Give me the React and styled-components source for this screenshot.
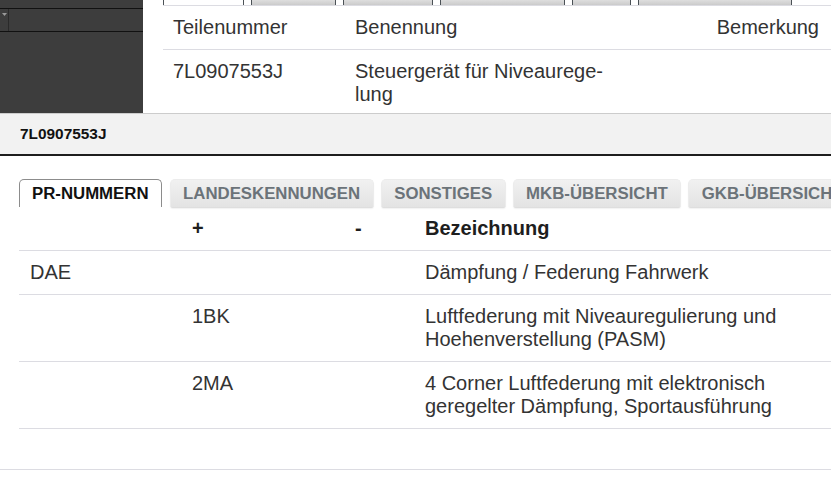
import React from "react";
import styled, { createGlobalStyle } from "styled-components";

const GlobalStyle = createGlobalStyle`
  html, body {
    margin: 0;
    padding: 0;
    background: #ffffff;
    overflow: hidden;
  }

  body {
    font-family: "Liberation Sans", Arial, sans-serif;
    color: #333333;
  }
`;

const Page = styled.div`
  width: 831px;
  height: 501px;
  display: flex;
  flex-direction: column;
  overflow: hidden;
`;

const TopArea = styled.div`
  height: 113px;
  display: flex;
  overflow: hidden;
  flex-shrink: 0;
`;

const Sidebar = styled.aside`
  width: 143px;
  flex-shrink: 0;
  background: #3d3d3d;
  padding-top: 8px;
`;

const SideSelect = styled.div`
  height: 22px;
  border-top: 1px solid #111111;
  border-bottom: 1px solid #111111;
  display: flex;
`;

const SideArrow = styled.div`
  width: 9px;
  border-right: 1px solid #2a2a2a;
  display: flex;
  justify-content: center;
  padding-top: 4px;
  box-sizing: border-box;
`;

const Main = styled.main`
  flex: 1;
  padding-left: 20px;
  display: flex;
  flex-direction: column;
  & > * {
    flex-shrink: 0;
  }
`;

const TopTabs = styled.div`
  height: 5px;
  display: flex;
  gap: 7px;
  border-bottom: 1px solid #dcdce2;
  overflow: hidden;
`;

const TopTab = styled.div`
  width: ${(p) => p.$w}px;
  height: 5px;
  flex-shrink: 0;
  box-sizing: border-box;
  border-left: 1px solid #4b5156;
  border-right: 1px solid #4b5156;
  background: ${(p) =>
    p.$active ? "#ffffff" : "linear-gradient(#dedede, #cbcbcb)"};
`;

const PartsTable = styled.div`
  display: grid;
  grid-template-columns: 182px 275px 1fr;
  font-size: 20px;
  line-height: 23px;
  color: #333333;
`;

const PartsCell = styled.div`
  padding: 10px 12px 10px 10px;
  border-bottom: 1px solid #dcdce2;
  text-align: ${(p) => (p.$right ? "right" : "left")};
  hyphens: manual;
`;

const Panel = styled.section`
  flex: 1;
  border-top: 1px solid #cccccc;
  display: flex;
  flex-direction: column;
`;

const PanelHeader = styled.header`
  height: 40px;
  background: #f2f2f2;
  border-bottom: 2px solid #1e1e1e;
  display: flex;
  align-items: center;
  padding-left: 20px;
  font-size: 15.4px;
  font-weight: bold;
  color: #111111;
`;

const PanelBody = styled.div`
  padding: 23px 0 40px 19px;
`;

const TabRow = styled.div`
  display: flex;
  gap: 7px;
  white-space: nowrap;
`;

const Tab = styled.div`
  height: 28px;
  box-sizing: border-box;
  padding: 0 ${(p) => (p.$active ? 12 : 12.5)}px;
  margin-right: ${(p) => (p.$active ? 1 : 0)}px;
  display: flex;
  align-items: center;
  font-size: 16.8px;
  font-weight: bold;
  border-radius: 5px 5px 0 0;
  flex-shrink: 0;
  color: ${(p) => (p.$active ? "#111111" : "#6b7379")};
  background: ${(p) =>
    p.$active ? "#ffffff" : "linear-gradient(#f1f1f1, #e3e3e3)"};
  border: 1px solid ${(p) => (p.$active ? "#8c8c8c" : "#ececec")};
  border-bottom: none;
  box-shadow: ${(p) => (p.$active ? "none" : "0 2px 2px -1px rgba(0,0,0,0.18)")};
`;

const PrTable = styled.div`
  display: grid;
  grid-template-columns: 162px 163px 70px 1fr;
  font-size: 20px;
  line-height: 23px;
  color: #333333;
`;

const PrCell = styled.div`
  padding: 10px 11px;
  border-bottom: 1px solid #dcdce2;
  font-weight: ${(p) => (p.$head ? "bold" : "normal")};
  color: ${(p) => (p.$head ? "#1e1e1e" : "#333333")};
`;

const Footer = styled.footer`
  border-top: 1px solid #dcdce2;
  flex: 1;
`;

const topTabs = [81, 85, 90, 125, 59, 154];

const tabs = [
  "PR-NUMMERN",
  "LANDESKENNUNGEN",
  "SONSTIGES",
  "MKB-ÜBERSICHT",
  "GKB-ÜBERSICHT",
];

const prRows = [
  ["DAE", "", "", "Dämpfung / Federung Fahrwerk"],
  ["", "1BK", "", "Luftfederung mit Niveauregulierung und Hoehenverstellung (PASM)"],
  ["", "2MA", "", "4 Corner Luftfederung mit elektronisch geregelter Dämpfung, Sportausführung"],
];

export default function App() {
  return (
    <Page>
      <GlobalStyle />
      <TopArea>
        <Sidebar>
          <SideSelect>
            <SideArrow>
              <svg width="5" height="3" viewBox="0 0 5 3">
                <path d="M0 0 H5 L2.5 3 Z" fill="#9a9a9a" />
              </svg>
            </SideArrow>
          </SideSelect>
        </Sidebar>
        <Main>
          <TopTabs>
            {topTabs.map((w, i) => (
              <TopTab key={i} $w={w} $active={i === 0} />
            ))}
          </TopTabs>
          <PartsTable>
            <PartsCell>Teilenummer</PartsCell>
            <PartsCell>Benennung</PartsCell>
            <PartsCell $right>Bemerkung</PartsCell>
            <PartsCell>7L0907553J</PartsCell>
            <PartsCell>Steuergerät für Niveaurege{"\u00AD"}lung</PartsCell>
            <PartsCell $right></PartsCell>
          </PartsTable>
        </Main>
      </TopArea>
      <Panel>
        <PanelHeader>7L0907553J</PanelHeader>
        <PanelBody>
          <TabRow>
            {tabs.map((t, i) => (
              <Tab key={t} $active={i === 0}>
                {t}
              </Tab>
            ))}
          </TabRow>
          <PrTable>
            <PrCell $head></PrCell>
            <PrCell $head>+</PrCell>
            <PrCell $head>-</PrCell>
            <PrCell $head>Bezeichnung</PrCell>
            {prRows.map((row, r) =>
              row.map((c, i) => <PrCell key={r + "-" + i}>{c}</PrCell>)
            )}
          </PrTable>
        </PanelBody>
        <Footer />
      </Panel>
    </Page>
  );
}
